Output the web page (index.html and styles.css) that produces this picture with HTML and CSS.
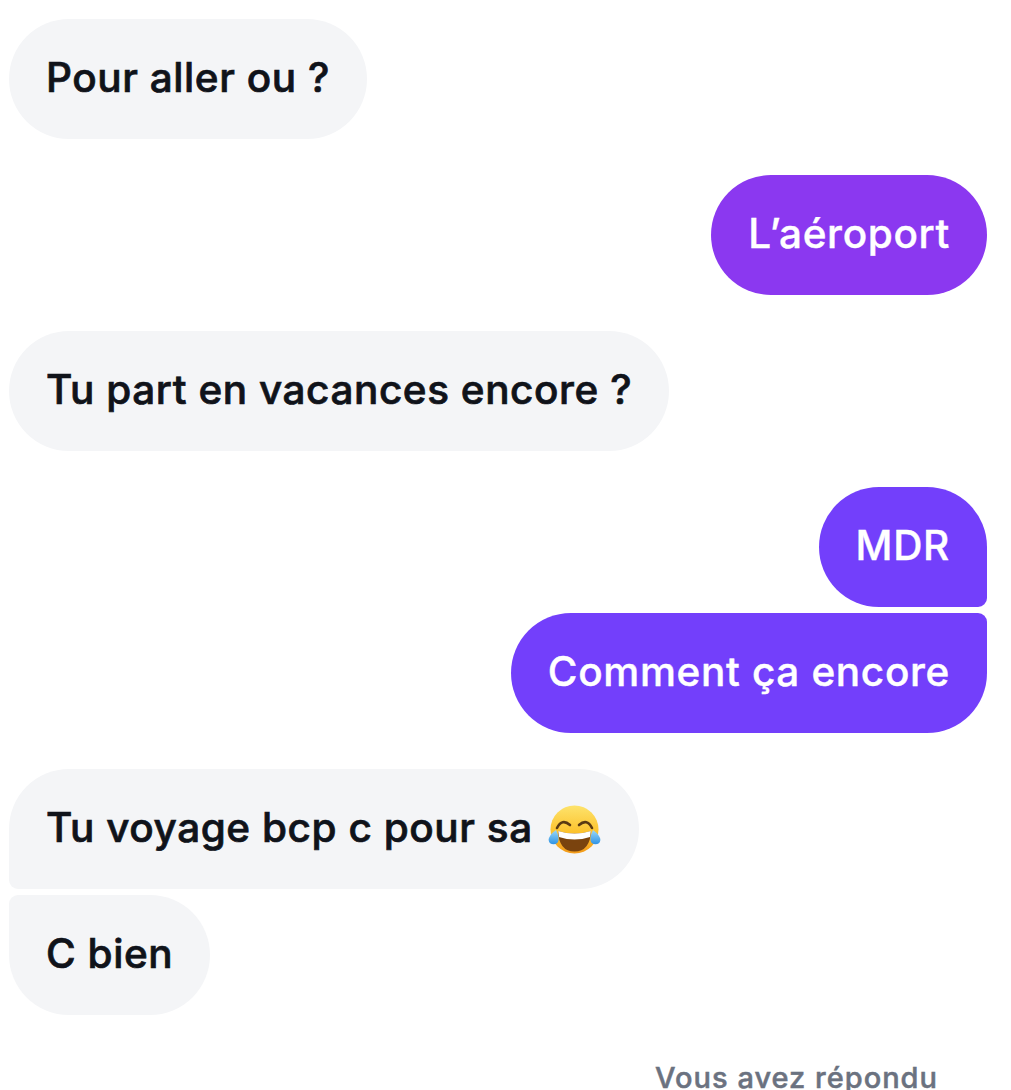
FILE: index.html
```html
<!DOCTYPE html>
<html lang="fr">
  <head>
    <meta charset="UTF-8" />
    <meta name="viewport" content="width=device-width, initial-scale=1.0" />
    <title>Messages</title>
    <link rel="stylesheet" href="styles.css">
  </head>
  <body>
    <div class="thread">
      <div class="group">
        <div class="bubble them">Pour aller ou ?</div>
      </div>
      <div class="group">
        <div class="bubble me me-violet">L’aéroport</div>
      </div>
      <div class="group">
        <div class="bubble them">Tu part en vacances encore ?</div>
      </div>
      <div class="group">
        <div class="bubble me first">MDR</div>
        <div class="bubble me last">Comment ça encore</div>
      </div>
      <div class="group">
        <div class="bubble them first">
          Tu voyage bcp c pour sa
          <svg class="emoji" viewBox="0 0 54 50" aria-hidden="true">
            <defs>
              <linearGradient id="face" x1="0" y1="0" x2="0" y2="1">
                <stop offset="0" stop-color="#fde36c" />
                <stop offset="0.55" stop-color="#fcc32e" />
                <stop offset="1" stop-color="#f29a1a" />
              </linearGradient>
              <linearGradient id="tear" x1="0" y1="0" x2="0" y2="1">
                <stop offset="0" stop-color="#9ad8f8" />
                <stop offset="1" stop-color="#2f93e4" />
              </linearGradient>
            </defs>
            <circle cx="26.5" cy="25.5" r="24" fill="url(#face)" />
            <path d="M10 27 Q26.5 32 43 27 Q42 47.5 26.5 47.5 Q11 47.5 10 27Z" fill="#7a430e" />
            <path d="M10.2 27 Q26.5 32 42.8 27 L42 33 Q26.5 38 11 33Z" fill="#fff" />
            <path d="M9 24 Q14 14 22 21" fill="none" stroke="#5a3a12" stroke-width="2.6" stroke-linecap="round" />
            <path d="M44 24 Q39 14 31 21" fill="none" stroke="#5a3a12" stroke-width="2.6" stroke-linecap="round" />
            <path d="M8 26 Q11 32 10.5 36 A5 5 0 0 1 0.6 36 Q1 31 8 26Z" fill="url(#tear)" />
            <path d="M45 26 Q42 32 42.5 36 A5 5 0 0 0 52.4 36 Q52 31 45 26Z" fill="url(#tear)" />
          </svg>
        </div>
        <div class="bubble them last">C bien</div>
      </div>
      <div class="reply-note">Vous avez répondu</div>
    </div>
  </body>
</html>
```

FILE: styles.css
```css
body {
  font-family: Inter, "Noto Sans", sans-serif;
  background-color: #ffffff;
  margin: 0;
  padding: 0;
  height: 1090px;
  overflow: hidden;
}
.thread {
  display: flex;
  flex-direction: column;
  gap: 36px;
  padding: 19px 24px 0 9px;
}
.group {
  display: flex;
  flex-direction: column;
  gap: 6px;
}
.bubble {
  box-sizing: border-box;
  display: flex;
  align-items: center;
  gap: 15px;
  height: 120px;
  padding: 0 37px 4px;
  border-radius: 60px;
  font-size: 40.5px;
  font-weight: 500;
  letter-spacing: 0.65px;
  -webkit-text-stroke: 0.4px currentColor;
  white-space: nowrap;
  width: fit-content;
}
.them {
  background-color: #f4f5f7;
  color: #10131a;
  letter-spacing: 0.55px;
  -webkit-text-stroke: 0.7px currentColor;
}
.me {
  align-self: flex-end;
  background-color: #733ffb;
  color: #ffffff;
}
.me-violet {
  background-color: #8b38f0;
}
.them.first {
  border-bottom-left-radius: 9px;
}
.them.last {
  border-top-left-radius: 9px;
}
.me.first {
  border-bottom-right-radius: 9px;
}
.me.last {
  border-top-right-radius: 9px;
}
.emoji {
  width: 54px;
  height: 50px;
  margin-top: 4px;
}
.reply-note {
  align-self: flex-end;
  margin: 9px 49px 0 0;
  color: #6b7280;
  font-size: 29px;
  font-weight: 500;
  letter-spacing: 1px;
  -webkit-text-stroke: 0.5px currentColor;
  white-space: nowrap;
}
```
